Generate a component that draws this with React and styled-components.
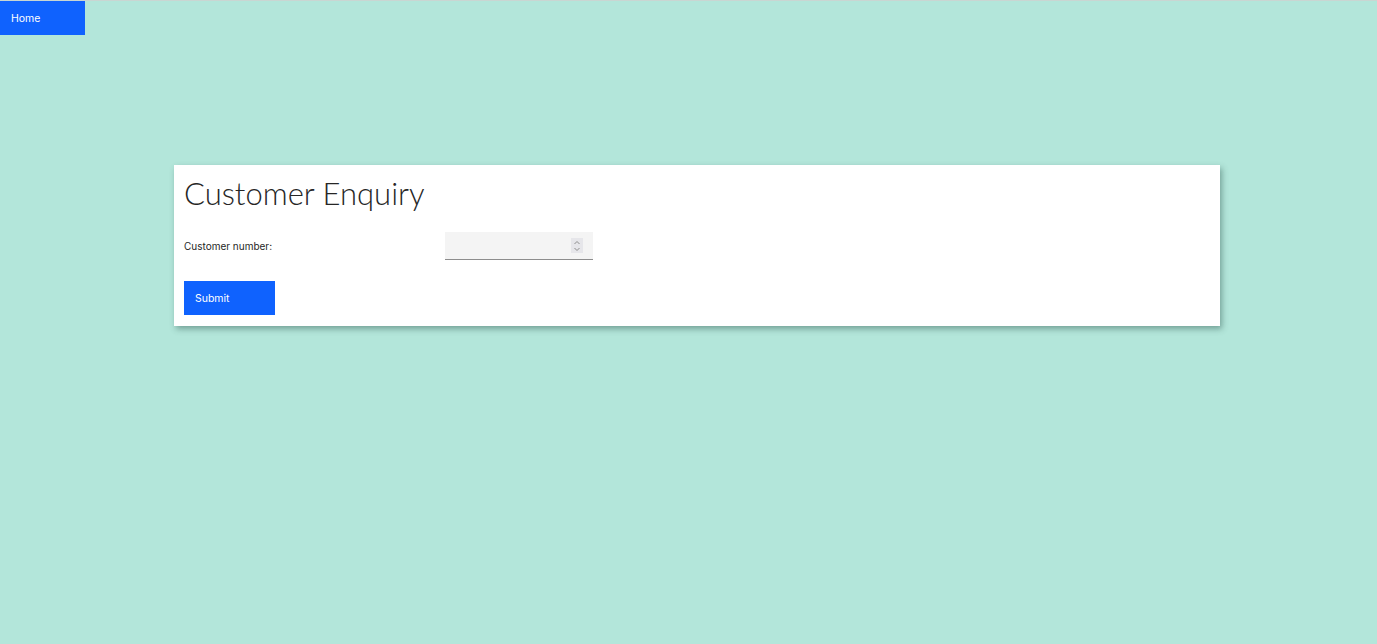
import React from 'react';
import styled, { createGlobalStyle } from 'styled-components';

const GlobalStyle = createGlobalStyle`
  html, body {
    margin: 0;
    padding: 0;
    background: #b3e6da;
    font-family: Inter, "Noto Sans", sans-serif;
  }
`;

function App() {
  return (
    <Page>
      <GlobalStyle />
      <TopLine />
      <Nav>
        <HomeButton>Home</HomeButton>
      </Nav>
      <Main>
        <Card>
          <Title>Customer Enquiry</Title>
          <Row>
            <Label>Customer number:</Label>
            <NumberField>
              <Spinner>
                <svg width="8" height="12" viewBox="0 0 8 12">
                  <path d="M1.5 4 L4 1.5 L6.5 4" fill="none" stroke="#8d8d8d" strokeWidth="1" />
                  <path d="M1.5 8 L4 10.5 L6.5 8" fill="none" stroke="#8d8d8d" strokeWidth="1" />
                </svg>
              </Spinner>
            </NumberField>
          </Row>
          <SubmitButton>Submit</SubmitButton>
        </Card>
      </Main>
    </Page>
  );
}

const Page = styled.div`
  min-height: 644px;
  background: #b3e6da;
`;

const TopLine = styled.div`
  height: 1px;
  background: #c9d6d2;
`;

const Nav = styled.div`
  display: flex;
`;

const HomeButton = styled.div`
  width: 85px;
  height: 34px;
  background: #0f62fe;
  color: #ffffff;
  font-size: 10.5px;
  display: flex;
  align-items: center;
  padding-left: 11px;
  box-sizing: border-box;
`;

const Main = styled.div`
  padding: 130px 0 0 174px;
`;

const Card = styled.div`
  width: 1046px;
  height: 161px;
  box-sizing: border-box;
  background: #ffffff;
  padding: 10px 10px;
  box-shadow: 2px 3px 6px rgba(40, 80, 70, 0.45);
  display: flex;
  flex-direction: column;
`;

const Title = styled.h1`
  margin: 0;
  font-family: Lato, Inter, sans-serif;
  font-size: 31px;
  font-weight: 300;
  color: #262626;
  line-height: 37px;
`;

const Row = styled.div`
  display: flex;
  align-items: center;
  margin-top: 20px;
`;

const Label = styled.div`
  width: 261px;
  font-size: 10px;
  color: #262626;
`;

const NumberField = styled.div`
  width: 148px;
  height: 28px;
  box-sizing: border-box;
  background: #f4f4f4;
  border-bottom: 1px solid #8d8d8d;
  display: flex;
  align-items: center;
  justify-content: flex-end;
  padding-right: 10px;
`;

const Spinner = styled.div`
  width: 12px;
  height: 15px;
  background: #e6e6ea;
  display: flex;
  align-items: center;
  justify-content: center;
`;

const SubmitButton = styled.div`
  width: 91px;
  height: 34px;
  margin-top: 21px;
  background: #0f62fe;
  color: #ffffff;
  font-size: 10.5px;
  display: flex;
  align-items: center;
  padding-left: 11px;
  box-sizing: border-box;
`;

export default App;
